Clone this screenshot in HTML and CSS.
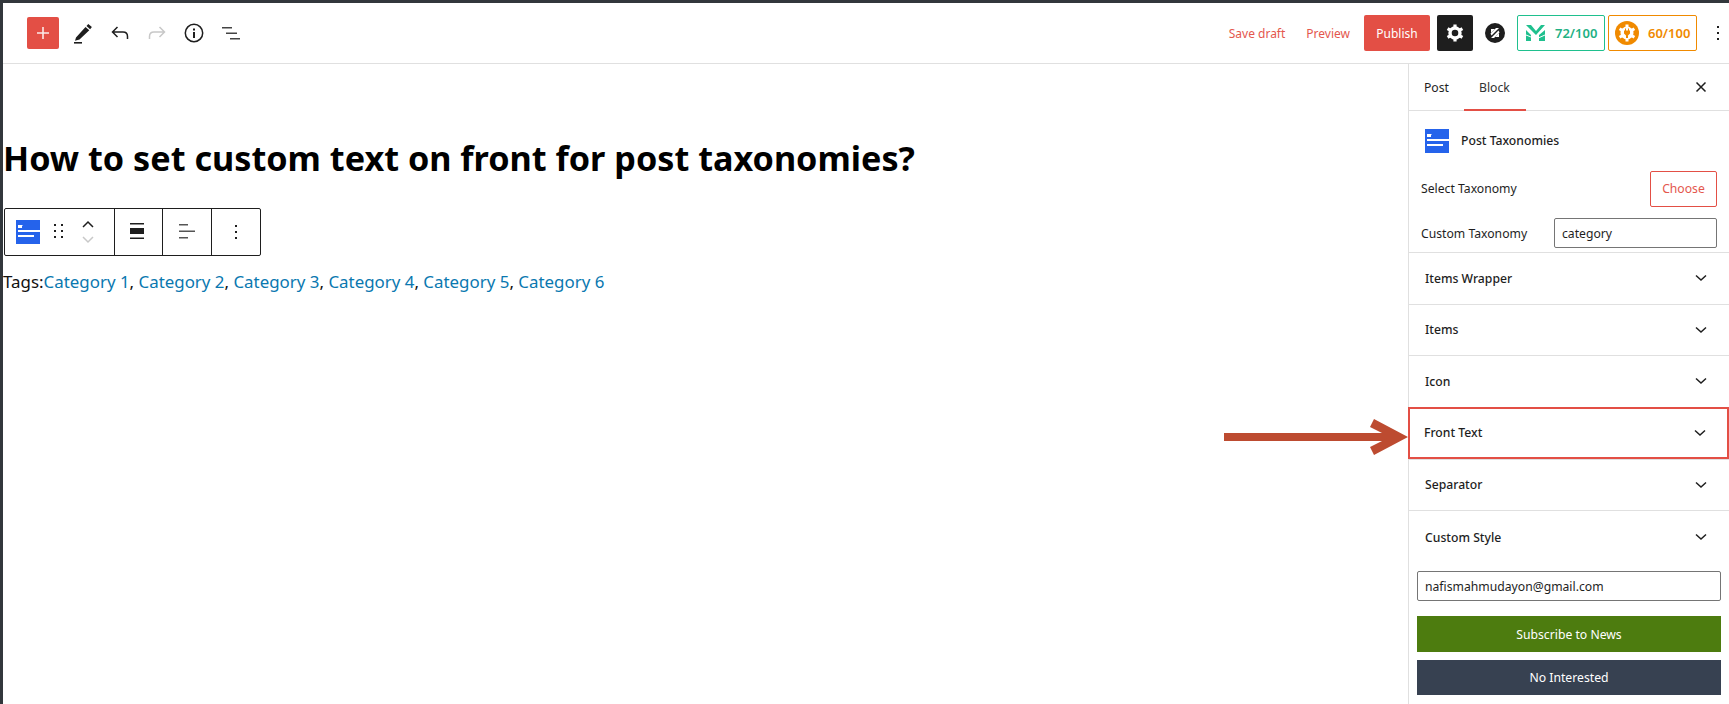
FILE: index.html
```html
<!DOCTYPE html>
<html lang="en">
<head>
    <meta charset="UTF-8">
    <title>Edit Post</title>
    <link rel="stylesheet" href="styles.css">
</head>
<body>
    <div class="frame">
        <!-- Top toolbar -->
        <header class="topbar">
            <div class="tools">
                <button class="add-btn">
                    <svg width="14" height="14" viewBox="0 0 14 14"><path d="M7 1v12M1 7h12" stroke="#fbe9e7" stroke-width="1.6"/></svg>
                </button>
                <svg class="tool" width="24" height="24" viewBox="0 0 24 24"><path d="M5 16.5 14.5 6l3.8 3.2-9.8 9.3-4.5 1.3z M15.5 5l1.8-2 3.6 3-1.800 2.200z" fill="#1e1e1e"/><rect x="3" y="21" width="8" height="1.6" fill="#1e1e1e"/></svg>
                <svg class="tool" width="24" height="24" viewBox="0 0 24 24"><path d="M9.5 6 4.5 11l5 5M5 11h10c3 0 4.5 2 4.5 4.5V18" fill="none" stroke="#1e1e1e" stroke-width="1.5"/></svg>
                <svg class="tool" width="24" height="24" viewBox="0 0 24 24"><path d="M14.5 6l5 5-5 5M19 11H9c-3 0-4.5 2-4.5 4.5V18" fill="none" stroke="#c8c8c8" stroke-width="1.5"/></svg>
                <svg class="tool" width="24" height="24" viewBox="0 0 24 24"><circle cx="12" cy="12" r="8.7" fill="none" stroke="#1e1e1e" stroke-width="1.5"/><path d="M11 11h2v6h-2zM11 7.5h2v2h-2z" fill="#1e1e1e"/></svg>
                <svg class="tool" width="24" height="24" viewBox="0 0 24 24"><path d="M3 6h10v1.500H3zM7 11.500h11V13H7zM11 17h10v1.500H11z" fill="#444"/></svg>
            </div>
            <div class="actions">
                <span class="link-action save">Save draft</span>
                <span class="link-action preview">Preview</span>
                <button class="publish">Publish</button>
                <button class="settings">
                    <svg width="20" height="20" viewBox="0 0 20 20"><circle cx="10" cy="10" r="5" fill="none" stroke="#fff" stroke-width="3.4"/><path d="M10 1.500v3M10 15.500v3M2.600 5.700l2.600 1.500M14.800 12.800l2.600 1.500M2.600 14.300l2.600-1.500M14.800 7.200l2.600-1.500" stroke="#fff" stroke-width="3.2"/></svg>
                </button>
                <svg class="zeta" width="20" height="20" viewBox="0 0 20 20"><circle cx="10" cy="10" r="10" fill="#1e1e1e"/><path d="M5.500 10.500 11 5h3L6.500 12.500zM14.500 9.500 9 15H6l7.500-7.500z" fill="#fff"/><path d="M6 6h4l-4 4zM14 14h-4l4-4z" fill="#fff"/></svg>
                <div class="score score-green">
                    <svg width="20" height="18" viewBox="0 0 20 18"><path d="M0 1l5 0 5 6 5-6 4 0-9 10zM0 6l5 5v6H0zM19 6v11h-6v-6z" fill="#1fc08e"/><path d="M0 11l10 4 9-4" fill="none" stroke="#fff" stroke-width="1"/></svg>
                    <span>72/100</span>
                </div>
                <div class="score score-orange">
                    <svg width="24" height="24" viewBox="0 0 24 24"><circle cx="12" cy="12" r="12" fill="#f08a00"/><circle cx="12" cy="12" r="6.5" fill="#fff"/><path d="M12 3.500v4M12 16.500v4M4.600 7.700l3.400 2M16 14.300l3.400 2M4.600 16.300l3.400-2M16 9.700l3.400-2" stroke="#fff" stroke-width="3"/><path d="M10 7.500h1v2h2v-2h1v2h1v3l-2 2v2.500h-2V14.500l-2-2v-3h1z" fill="#f08a00"/></svg>
                    <span>60/100</span>
                </div>
                <svg class="more" width="4" height="16" viewBox="0 0 4 16"><path d="M1 1h2v2H1zM1 7h2v2H1zM1 13h2v2H1z" fill="#1e1e1e"/></svg>
            </div>
        </header>

        <div class="workspace">
            <!-- Editor canvas -->
            <main class="canvas">
                <h1 class="post-title">How to set custom text on front for post taxonomies?</h1>
                <div class="block-toolbar">
                    <div class="tb-group tb-first">
                        <svg width="24" height="24" viewBox="0 0 24 24"><rect width="24" height="24" fill="#2563eb"/><path d="M2 5h4l1 1h-1v2H2zM2 10h22v2H2zM2 15h16v2H2z" fill="#fff"/></svg>
                        <svg class="drag" width="10" height="16" viewBox="0 0 10 16"><path d="M0 0h2v2H0zM7 0h2v2H7zM0 6h2v2H0zM7 6h2v2H7zM0 12h2v2H0zM7 12h2v2H7z" fill="#1e1e1e"/></svg>
                        <svg class="mover" width="14" height="24" viewBox="0 0 14 24"><path d="M2 7l5-5 5 5" fill="none" stroke="#1e1e1e" stroke-width="1.5"/><path d="M2 17l5 5 5-5" fill="none" stroke="#c8c8c8" stroke-width="1.5"/></svg>
                    </div>
                    <div class="tb-group">
                        <svg width="16" height="18" viewBox="0 0 16 18"><path d="M0 0h14v1.500H0zM0 5h14v6H0zM0 14.500h14V16H0z" fill="#1e1e1e"/></svg>
                    </div>
                    <div class="tb-group">
                        <svg width="18" height="18" viewBox="0 0 18 18"><path d="M1 1h9v1.500H1zM1 7.500h16V9H1zM1 14h9v1.500H1z" fill="#555"/></svg>
                    </div>
                    <div class="tb-group">
                        <svg width="4" height="16" viewBox="0 0 4 16"><path d="M1 1h2v2H1zM1 7h2v2H1zM1 13h2v2H1z" fill="#1e1e1e"/></svg>
                    </div>
                </div>
                <p class="tags">Tags:<a>Category 1</a>, <a>Category 2</a>, <a>Category 3</a>, <a>Category 4</a>, <a>Category 5</a>, <a>Category 6</a></p>
            </main>

            <!-- Settings sidebar -->
            <aside class="sidebar">
                <div class="tabs">
                    <span class="tab">Post</span>
                    <span class="tab tab-active">Block</span>
                    <svg class="close" width="12" height="12" viewBox="0 0 12 12"><path d="M1.500 1.500l9 9M10.500 1.500l-9 9" stroke="#1e1e1e" stroke-width="1.5"/></svg>
                </div>
                <div class="block-card">
                    <svg width="24" height="24" viewBox="0 0 24 24"><rect width="24" height="24" fill="#2563eb"/><path d="M2 5h4l1 1h-1v2H2zM2 10h22v2H2zM2 15h16v2H2z" fill="#fff"/></svg>
                    <span>Post Taxonomies</span>
                </div>
                <div class="field field-choose">
                    <span>Select Taxonomy</span>
                    <button class="choose">Choose</button>
                </div>
                <div class="field field-custom">
                    <span>Custom Taxonomy</span>
                    <input class="text-input custom-input" value="category">
                </div>
                <div class="panel-row">Items Wrapper<svg class="chev" width="12" height="8" viewBox="0 0 12 8"><path d="M1 1.500l5 4.500 5-4.500" fill="none" stroke="#1e1e1e" stroke-width="1.5"/></svg></div>
                <div class="panel-row">Items<svg class="chev" width="12" height="8" viewBox="0 0 12 8"><path d="M1 1.500l5 4.500 5-4.500" fill="none" stroke="#1e1e1e" stroke-width="1.5"/></svg></div>
                <div class="panel-row">Icon<svg class="chev" width="12" height="8" viewBox="0 0 12 8"><path d="M1 1.500l5 4.500 5-4.500" fill="none" stroke="#1e1e1e" stroke-width="1.5"/></svg></div>
                <div class="panel-row panel-marked">Front Text<svg class="chev" width="12" height="8" viewBox="0 0 12 8"><path d="M1 1.500l5 4.500 5-4.500" fill="none" stroke="#1e1e1e" stroke-width="1.5"/></svg></div>
                <div class="panel-row">Separator<svg class="chev" width="12" height="8" viewBox="0 0 12 8"><path d="M1 1.500l5 4.500 5-4.500" fill="none" stroke="#1e1e1e" stroke-width="1.5"/></svg></div>
                <div class="panel-row panel-last">Custom Style<svg class="chev" width="12" height="8" viewBox="0 0 12 8"><path d="M1 1.500l5 4.500 5-4.500" fill="none" stroke="#1e1e1e" stroke-width="1.5"/></svg></div>
                <div class="subscribe">
                    <input class="text-input email-input" value="nafismahmudayon@gmail.com">
                    <button class="sub-btn sub-green">Subscribe to News</button>
                    <button class="sub-btn sub-dark">No Interested</button>
                </div>
            </aside>
        </div>

        <!-- Annotation arrow over the page -->
        <svg class="arrow" width="190" height="36" viewBox="0 0 190 36"><path d="M0 14h170v8H0z" fill="#bd4b30"/><path d="M150 0 184 18 150 36 146 28 166 18 146 8z" fill="#bd4b30"/></svg>
    </div>
</body>
</html>
```

FILE: styles.css
```css
* {
    box-sizing: border-box;
}
html, body {
    margin: 0;
    height: 100%;
    overflow: hidden;
}
body {
    font-family: "Noto Sans", "Open Sans", sans-serif;
    background-color: #32373c;
    padding: 3px 0 0 3px;
}
button {
    font-family: inherit;
    border: 0;
    padding: 0;
}
.frame {
    position: relative;
    height: 701px;
    background-color: #fff;
    display: flex;
    flex-direction: column;
}
.topbar {
    height: 61px;
    border-bottom: 1px solid #e0e0e0;
    display: flex;
    align-items: center;
    justify-content: space-between;
    padding: 0 9px 0 24px;
}
.tools, .actions {
    display: flex;
    align-items: center;
}
.add-btn {
    width: 32px;
    height: 32px;
    border-radius: 2px;
    background-color: #e34f45;
    display: flex;
    align-items: center;
    justify-content: center;
    margin-right: 12px;
}
.tool {
    margin-right: 13px;
}
.link-action {
    font-size: 12px;
    color: #e4574d;
}
.save {
    margin-right: 21px;
}
.preview {
    margin-right: 14px;
}
.publish {
    width: 66px;
    height: 36px;
    border-radius: 2px;
    background-color: #e34f45;
    color: #fff;
    font-size: 12px;
    margin-right: 7px;
}
.settings {
    width: 36px;
    height: 36px;
    border-radius: 2px;
    background-color: #1e1e1e;
    display: flex;
    align-items: center;
    justify-content: center;
    margin-right: 12px;
}
.zeta {
    margin-right: 12px;
}
.score {
    height: 36px;
    border: 1px solid;
    border-radius: 2px;
    display: flex;
    align-items: center;
    font-size: 13px;
    font-weight: 600;
}
.score-green {
    width: 88px;
    border-color: #1fc08e;
    color: #1fb184;
    padding-left: 8px;
    gap: 9px;
    margin-right: 3px;
}
.score-orange {
    width: 89px;
    border-color: #f08a00;
    color: #f08a00;
    padding-left: 6px;
    gap: 9px;
    margin-right: 19px;
}
.workspace {
    flex: 1;
    display: flex;
    min-height: 0;
}
.canvas {
    flex: 1;
    min-width: 0;
}
.post-title {
    margin: 72px 0 0;
    font-size: 34.2px;
    line-height: 44px;
    font-weight: 700;
    color: #000;
}
.block-toolbar {
    display: flex;
    width: 257px;
    height: 48px;
    margin: 28px 0 0 1px;
    border: 1px solid #1e1e1e;
    border-radius: 2px;
}
.tb-group {
    width: 49px;
    display: flex;
    align-items: center;
    justify-content: center;
    border-left: 1px solid #1e1e1e;
}
.tb-first {
    width: 109px;
    border-left: 0;
    justify-content: flex-start;
    padding-left: 11px;
}
.drag {
    margin-left: 14px;
}
.mover {
    margin-left: 17px;
}
.tags {
    margin: 14px 0 0;
    font-size: 16.9px;
    line-height: 24px;
    color: #111;
}
.tags a {
    color: #0a78b0;
}
.sidebar {
    width: 321px;
    flex: none;
    border-left: 1px solid #e0e0e0;
    font-size: 12.2px;
    color: #1e1e1e;
    display: flex;
    flex-direction: column;
}
.tabs {
    height: 47px;
    border-bottom: 1px solid #e0e0e0;
    display: flex;
    align-items: center;
    padding-left: 15px;
}
.tab {
    height: 47px;
    display: flex;
    align-items: center;
    margin-right: 15px;
}
.tab-active {
    border-bottom: 2px solid #e34f45;
    padding: 2px 15px 0;
    width: 62px;
    color: #333;
}
.close {
    margin-left: auto;
    margin-right: 22px;
}
.block-card {
    display: flex;
    align-items: center;
    gap: 12px;
    padding: 1px 0 0 16px;
    height: 58px;
    font-weight: 500;
}
.field {
    display: flex;
    align-items: center;
    justify-content: space-between;
    padding: 0 12px;
}
.field-choose {
    height: 37px;
    margin-top: 1px;
}
.field-custom {
    height: 30px;
    margin-top: 11px;
}
.choose {
    width: 67px;
    height: 36px;
    border: 1px solid #e34f45;
    border-radius: 2px;
    background: #fff;
    color: #e4574d;
    font-size: 12.2px;
}
.text-input {
    font-family: inherit;
    font-size: 12.2px;
    color: #1e1e1e;
    height: 30px;
    border: 1px solid #757575;
    border-radius: 2px;
    padding: 0 7px;
    background: #fff;
}
.custom-input {
    width: 163px;
}
.panel-row {
    height: 51.5px;
    flex: none;
    display: flex;
    align-items: center;
    justify-content: space-between;
    padding: 0 22px 0 16px;
    border-top: 1px solid #e0e0e0;
    font-weight: 500;
}
.field-custom + .panel-row {
    margin-top: 4px;
}
.panel-marked {
    border: 2px solid #e34f45;
    padding: 0 21px 0 14px;
    margin-left: -1px;
    height: 52px;
}
.panel-last {
    height: 53px;
}
.subscribe {
    display: flex;
    flex-direction: column;
    padding: 8px 8px 0 8px;
}
.email-input {
    width: 100%;
    margin-bottom: 15px;
}
.sub-btn {
    width: 100%;
    color: #fff;
    font-size: 12.2px;
    height: 36px;
}
.sub-green {
    background-color: #4d7c0f;
    margin-bottom: 8px;
}
.sub-dark {
    background-color: #374151;
    height: 35px;
}
.arrow {
    position: absolute;
    left: 1221px;
    top: 416px;
}
```
